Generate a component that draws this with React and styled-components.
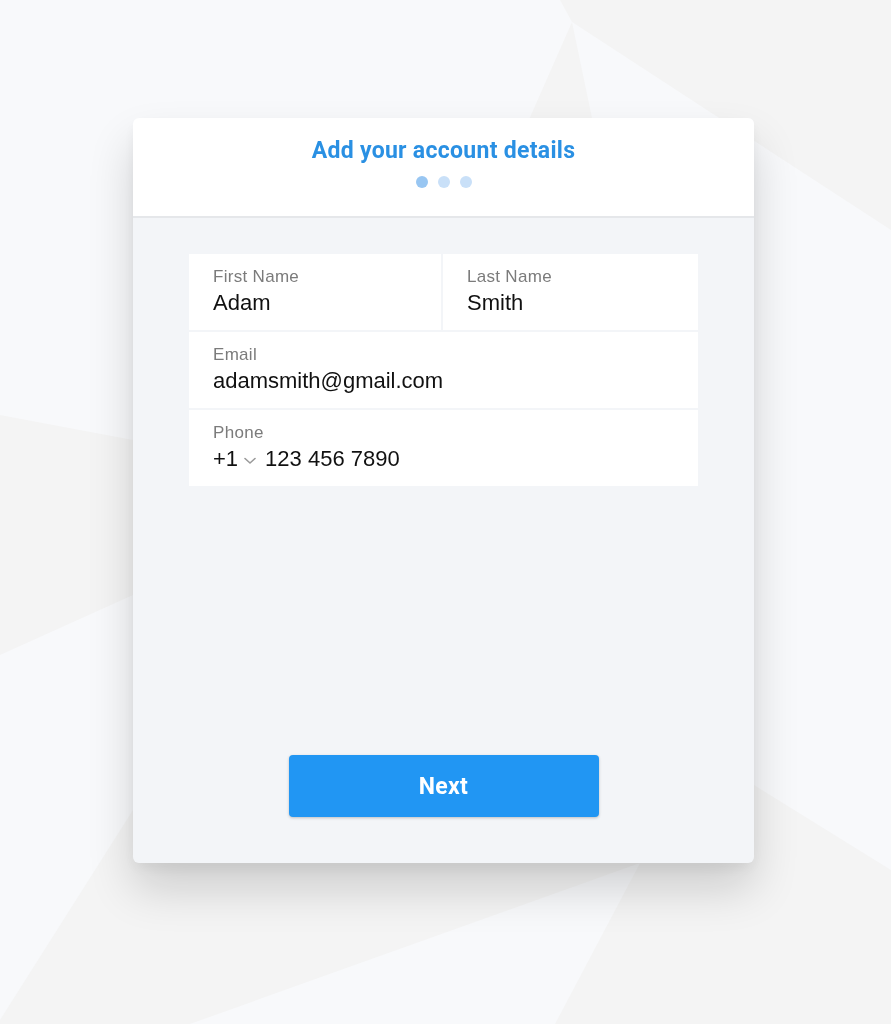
import React from 'react'
import styled, { createGlobalStyle } from 'styled-components'

const GlobalStyle = createGlobalStyle`
  html, body {
    margin: 0;
    padding: 0;
    background: #f4f4f4;
    font-family: "Liberation Sans", Arial, sans-serif;
  }
`

const Page = styled.div`
  position: relative;
  min-height: 100vh;
  display: flex;
  justify-content: center;
  align-items: flex-start;
  padding: 118px 4px 0 0;
  box-sizing: border-box;
`

const Backdrop = styled.svg`
  position: fixed;
  inset: 0;
  width: 100%;
  height: 100%;
  z-index: 0;
`

const Card = styled.div`
  position: relative;
  z-index: 1;
  width: 621px;
  height: 745px;
  border-radius: 6px;
  overflow: hidden;
  display: flex;
  flex-direction: column;
  background: #f3f5f8;
  box-shadow: 0 26px 46px rgba(0, 0, 0, 0.16), 0 6px 14px rgba(0, 0, 0, 0.05);
`

const Header = styled.div`
  height: 100px;
  box-sizing: border-box;
  background: #fff;
  border-bottom: 2px solid #e5e7ea;
  display: flex;
  flex-direction: column;
  align-items: center;
  padding-top: 20px;
`

const Title = styled.h1`
  margin: 0;
  font-family: Roboto, "Liberation Sans", sans-serif;
  font-weight: 700;
  font-size: 23px;
  line-height: 26px;
  letter-spacing: 0.3px;
  color: #2a90e3;
`

const Dots = styled.div`
  display: flex;
  gap: 10px;
  margin-top: 12px;
`

const Dot = styled.span`
  width: 12px;
  height: 12px;
  border-radius: 50%;
  background: ${p => (p.$active ? '#98c6f2' : '#c9e0f8')};
`

const Body = styled.div`
  flex: 1;
  display: flex;
  flex-direction: column;
  padding: 36px 56px 46px;
`

const Fields = styled.div`
  display: grid;
  grid-template-columns: 252px 1fr;
  gap: 2px;
`

const Field = styled.div`
  grid-column: ${p => (p.$wide ? '1 / -1' : 'auto')};
  height: 76px;
  box-sizing: border-box;
  background: #fff;
  padding: 13px 24px 0;
  display: flex;
  flex-direction: column;
  gap: 3px;
`

const Label = styled.span`
  font-size: 17px;
  line-height: 20px;
  letter-spacing: 0.3px;
  color: #7b7b7b;
`

const Value = styled.span`
  display: flex;
  align-items: center;
  font-size: 22px;
  line-height: 26px;
  color: #111;
`

const Chevron = styled.svg`
  margin: 3px 9px 0 6px;
`

const NextButton = styled.button`
  margin-top: auto;
  align-self: center;
  width: 310px;
  height: 62px;
  border: none;
  border-radius: 4px;
  background: #2196f3;
  color: #fff;
  font-family: Roboto, "Liberation Sans", sans-serif;
  font-weight: 700;
  font-size: 23px;
  letter-spacing: 0.3px;
  box-shadow: 0 1px 3px rgba(0, 0, 0, 0.22);
  cursor: pointer;
`

const Background = () => (
  <Backdrop viewBox="0 0 891 1024" preserveAspectRatio="none">
    <rect width="891" height="1024" fill="#f4f4f4" />
    <polygon points="0,0 560,0 572,22 520,140 133,440 0,415" fill="#f8f9fb" />
    <polygon points="572,22 891,230 891,870 754,785 592,118" fill="#f8f9fb" />
    <polygon points="0,655 133,595 133,810 0,1020" fill="#f8f9fb" />
    <polygon points="190,1024 640,863 555,1024" fill="#f8f9fb" />
  </Backdrop>
)

const App = () => {
  return (
    <Page>
      <GlobalStyle />
      <Background />
      <Card>
        <Header>
          <Title>Add your account details</Title>
          <Dots>
            <Dot $active />
            <Dot />
            <Dot />
          </Dots>
        </Header>
        <Body>
          <Fields>
            <Field>
              <Label>First Name</Label>
              <Value>Adam</Value>
            </Field>
            <Field>
              <Label>Last Name</Label>
              <Value>Smith</Value>
            </Field>
            <Field $wide>
              <Label>Email</Label>
              <Value>adamsmith@gmail.com</Value>
            </Field>
            <Field $wide>
              <Label>Phone</Label>
              <Value>
                +1
                <Chevron width="12" height="8" viewBox="0 0 12 8">
                  <path d="M1 1.5 L6 6 L11 1.5" fill="none" stroke="#9a9a9a" strokeWidth="1.6" strokeLinecap="round" strokeLinejoin="round" />
                </Chevron>
                123 456 7890
              </Value>
            </Field>
          </Fields>
          <NextButton>Next</NextButton>
        </Body>
      </Card>
    </Page>
  )
}

export default App
